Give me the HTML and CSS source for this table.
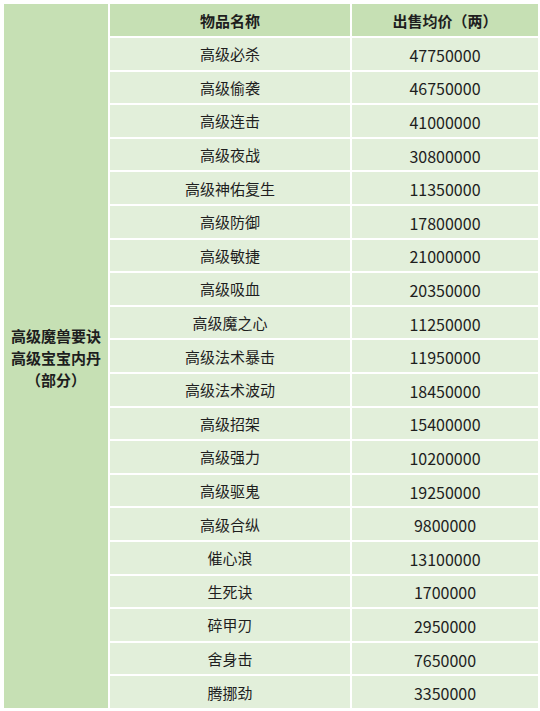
FILE: index.html
```html
<!DOCTYPE html>
<html lang="zh">
<head>
<meta charset="utf-8">
<link rel="stylesheet" href="styles.css">
</head>
<body>
<div class="sheet">
  <div class="cat">高级魔兽要诀<br>高级宝宝内丹<br>（部分）</div>
  <div class="head">物品名称</div>
  <div class="head">出售均价（两）</div>
  <div class="cell">高级必杀</div><div class="cell num">47750000</div>
  <div class="cell">高级偷袭</div><div class="cell num">46750000</div>
  <div class="cell">高级连击</div><div class="cell num">41000000</div>
  <div class="cell">高级夜战</div><div class="cell num">30800000</div>
  <div class="cell">高级神佑复生</div><div class="cell num">11350000</div>
  <div class="cell">高级防御</div><div class="cell num">17800000</div>
  <div class="cell">高级敏捷</div><div class="cell num">21000000</div>
  <div class="cell">高级吸血</div><div class="cell num">20350000</div>
  <div class="cell">高级魔之心</div><div class="cell num">11250000</div>
  <div class="cell">高级法术暴击</div><div class="cell num">11950000</div>
  <div class="cell">高级法术波动</div><div class="cell num">18450000</div>
  <div class="cell">高级招架</div><div class="cell num">15400000</div>
  <div class="cell">高级强力</div><div class="cell num">10200000</div>
  <div class="cell">高级驱鬼</div><div class="cell num">19250000</div>
  <div class="cell">高级合纵</div><div class="cell num">9800000</div>
  <div class="cell">催心浪</div><div class="cell num">13100000</div>
  <div class="cell">生死诀</div><div class="cell num">1700000</div>
  <div class="cell">碎甲刃</div><div class="cell num">2950000</div>
  <div class="cell">舍身击</div><div class="cell num">7650000</div>
  <div class="cell">腾挪劲</div><div class="cell num">3350000</div>
</div>
</body>
</html>
```
FILE: styles.css
```css
html, body {
  margin: 0;
  padding: 0;
  background: #ffffff;
}
body {
  padding: 4px 2px 3px 4px;
  font-family: "Noto Sans CJK SC", "Noto Sans", sans-serif;
  color: #1e1e1e;
}
.sheet {
  width: 534px;
  height: 704px;
  display: grid;
  grid-template-columns: 104px 240px 186px;
  grid-template-rows: 32px repeat(20, 1fr);
  gap: 2px;
  background: #ffffff;
}
.cat {
  grid-row: 1 / span 21;
  grid-column: 1;
  background: #c6e0b4;
  display: flex;
  align-items: center;
  justify-content: center;
  text-align: center;
  font-weight: bold;
  font-size: 15px;
  line-height: 22px;
  padding-top: 4px;
}
.head {
  background: #c6e0b4;
  display: flex;
  align-items: center;
  justify-content: center;
  font-weight: bold;
  font-size: 15px;
}
.cell {
  background: #e2efda;
  display: flex;
  align-items: center;
  justify-content: center;
  font-size: 15px;
}
.num {
  font-size: 16px;
  padding-top: 2px;
}
```
